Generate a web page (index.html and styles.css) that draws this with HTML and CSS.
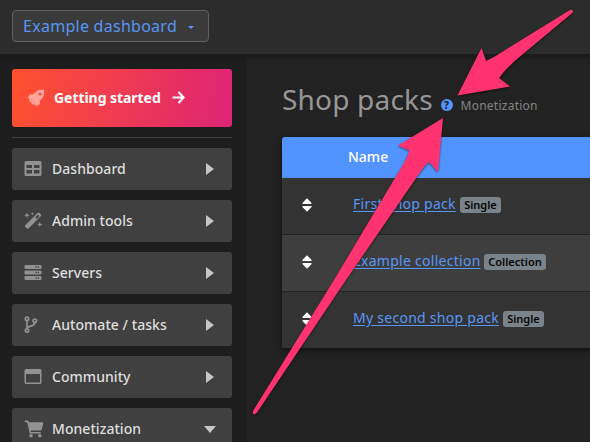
FILE: index.html
```html
<!DOCTYPE html>
<html lang="en">
<head>
<meta charset="utf-8">
<title>Shop packs</title>
<link rel="stylesheet" href="styles.css">
</head>
<body>
<header class="topbar">
  <button class="switcher"><span>Example dashboard</span><svg width="6" height="3" viewBox="0 0 6 3"><path d="M0 0h6L3 3z" fill="currentColor"/></svg></button>
</header>
<div class="layout">
  <nav class="sidebar">
    <a class="start">
      <svg class="rocket" width="18" height="18" viewBox="0 0 18 18"><path fill-rule="evenodd" d="M17 1C12 0 9 2 6.500 5.200H3.500C2.600 5.200 2 6 .6 9.500H4L8.500 14V17.500C12 16 12.800 15.400 12.800 14.500V11.500C16 9 18 6 17 1ZM13 3.500a1.500 1.500 0 1 1 0 3 1.500 1.500 0 0 1 0-3Z"/><path d="M3.200 9 9 14.800 6.500 16 2 11.500Z"/></svg>
      <span>Getting started</span>
      <svg width="13" height="13" viewBox="0 0 13 13" fill="none" stroke="#fff" stroke-width="2"><path d="M.5 6.500h11M6.500 1l5.200 5.500-5.200 5.500"/></svg>
    </a>
    <hr class="rule">
    <div class="menu">
      <a class="item"><svg class="icon" viewBox="0 0 19 17"><path fill-rule="evenodd" d="M2 1h14a1.500 1.500 0 0 1 1.500 1.500v12a1.500 1.500 0 0 1-1.500 1.500H2A1.500 1.500 0 0 1 .5 14.500v-12A1.500 1.500 0 0 1 2 1ZM2.500 5v3H8V5ZM10 5v3h5.500V5ZM2.500 10v3.500H8V10ZM10 10v3.500h5.500V10Z"/></svg><span>Dashboard</span><i class="caret"></i></a>
      <a class="item"><svg class="icon" viewBox="0 0 19 17"><path fill-rule="evenodd" d="M1 13.500 13.300 1.200Q14.500 0 15.700 1.200L16.800 2.300Q17.500 3.300 16.700 4.200L4.500 16.500Q3.700 17.200 3 16.500L1 14.500Q.6 14 1 13.500ZM11.300 5.300l1.600 1.600 2.600-2.800-1.400-1.400Z"/><path d="m3 .5.8 2 2 .8-2 .8-.8 2-.8-2-2-.8 2-.8ZM15.800 10l.7 1.800 1.900.7-1.900.7-.7 1.900-.7-1.900-1.900-.7 1.900-.7ZM8.300 0l.5 1.300 1.300.5-1.300.5-.5 1.300-.5-1.300-1.300-.5 1.300-.5Z"/></svg><span>Admin tools</span><i class="caret"></i></a>
      <a class="item"><svg class="icon" viewBox="0 0 19 17"><path d="M1.500 1h15a1 1 0 0 1 1 1v2a1 1 0 0 1-1 1h-15a1 1 0 0 1-1-1V2a1 1 0 0 1 1-1ZM1.500 6.500h15a1 1 0 0 1 1 1v2a1 1 0 0 1-1 1h-15a1 1 0 0 1-1-1v-2a1 1 0 0 1 1-1ZM1.500 12h15a1 1 0 0 1 1 1v2a1 1 0 0 1-1 1h-15a1 1 0 0 1-1-1v-2a1 1 0 0 1 1-1Z"/><path d="M11.500 3h1.200m1.100 0H15m-3.500 5.500h1.200m1.100 0H15m-3.500 5.500h1.200m1.100 0H15" stroke="#404040" stroke-width="1.300"/></svg><span>Servers</span><i class="caret"></i></a>
      <a class="item"><svg class="icon" viewBox="0 0 19 17"><g fill="none" stroke="#929292" stroke-width="1.700"><circle cx="3" cy="2.700" r="1.700"/><circle cx="3" cy="14.500" r="1.700"/><circle cx="10.800" cy="4.700" r="1.700"/><path d="M3 4.500v8.200M10.800 6.500C10.800 10.500 7 9.300 3 11.500"/></g></svg><span>Automate / tasks</span><i class="caret"></i></a>
      <a class="item"><svg class="icon" viewBox="0 0 19 17"><path fill-rule="evenodd" d="M2 1h14a1.500 1.500 0 0 1 1.500 1.500v12a1.500 1.500 0 0 1-1.500 1.500H2A1.500 1.500 0 0 1 .5 14.500v-12A1.500 1.500 0 0 1 2 1ZM2 6v8.500h14V6Z"/></svg><span>Community</span><i class="caret"></i></a>
      <a class="item"><svg class="icon cart" viewBox="0 0 20 18"><path d="M.8.600h2.900q.8 0 1 .8l.2.900h13.600q1 0 .8 1l-1.500 6.300q-.2.800-1 .8H6.600l.3 1.500h9.800v1.600H5.700L3.200 2.200H.8Z"/><circle cx="7" cy="15.800" r="1.800"/><circle cx="15.800" cy="15.800" r="1.800"/></svg><span>Monetization</span><i class="caret open"></i></a>
    </div>
  </nav>
  <main class="content">
    <div class="heading">
      <h1>Shop packs</h1>
      <span class="help">?</span>
      <span class="crumb">Monetization</span>
    </div>
    <section class="table">
      <div class="head">Name</div>
      <div class="row"><svg class="sort" width="10" height="14" viewBox="0 0 10 14"><path d="M5 .2 9.600 4.900q.4 1.100-.7 1.100H1.100Q0 6 .4 4.900ZM5 13.800.4 9.100Q0 8 1.100 8h7.800q1.100 0 .7 1.100Z"/></svg><a class="pack first">First shop pack</a><span class="badge">Single</span></div>
      <div class="row alt"><svg class="sort" width="10" height="14" viewBox="0 0 10 14"><path d="M5 .2 9.600 4.900q.4 1.100-.7 1.100H1.100Q0 6 .4 4.900ZM5 13.800.4 9.100Q0 8 1.100 8h7.800q1.100 0 .7 1.100Z"/></svg><a class="pack second">Example collection</a><span class="badge wide">Collection</span></div>
      <div class="row"><svg class="sort" width="10" height="14" viewBox="0 0 10 14"><path d="M5 .2 9.600 4.900q.4 1.100-.7 1.100H1.100Q0 6 .4 4.900ZM5 13.800.4 9.100Q0 8 1.100 8h7.800q1.100 0 .7 1.100Z"/></svg><a class="pack third">My second shop pack</a><span class="badge">Single</span></div>
    </section>
  </main>
</div>
<svg class="arrows" width="590" height="442" viewBox="0 0 590 442">
  <path d="M457.500 95.500 481.500 48 486 61Q493 58 502 52L570 10Q573 9 573 12L571 14 523 54Q506 68 499 78L510 86.500Z"/>
  <path d="M443 118 398 145.500 409.500 150.500Q407 158 401 168L334 280 253 411Q252 414 254.500 414.500L257 412.500 346 280 421 171Q425 165 429 162L438 172Z"/>
</svg>
</body>
</html>
```
FILE: styles.css
```css
* { box-sizing: border-box; }
body { margin: 0; width: 590px; height: 442px; overflow: hidden; background: #222; font-family: "Noto Sans", sans-serif; font-size: 14px; }
.topbar { height: 54px; padding: 10px 12px; background: #2c2c2c; }
.switcher { display: flex; align-items: center; width: 197px; height: 32px; margin: 0; padding: 0 0 0 10px; border: 1px solid #606060; border-radius: 4px; background: #3a3a3a; color: #5795f4; font: 16px "Noto Sans", sans-serif; letter-spacing: .27px; }
.switcher span { width: 165px; text-align: left; white-space: nowrap; }
.switcher svg { margin-top: 2px; }
.layout { display: flex; height: 388px; background: linear-gradient(#0004, transparent 7px); }
.sidebar { width: 247px; flex: none; padding: 15px 15px 0 12px; background: linear-gradient(#191919, #1d1d1d 8px); }
.start { display: flex; align-items: center; height: 58px; padding-left: 15px; border-radius: 3px; background: linear-gradient(100deg, #ff512f, #dd2476); color: #fff; font-weight: 700; }
.start span { width: 118px; margin: -2px 0 0 9px; white-space: nowrap; letter-spacing: -.05px; }
.start svg { margin-top: -1px; }
.rocket { fill: #ffa59a; }
.rule { height: 1px; margin: 10px 0; border: 0; background: #414141; }
.menu { display: flex; flex-direction: column; gap: 10px; }
.item { display: flex; align-items: center; height: 42px; flex: none; padding: 0 15px 0 12px; border-radius: 3px; background: #404040; color: #dedede; font-weight: 500; letter-spacing: .05px; }
.item span { flex: 1; margin: -2px 0 0 9px; white-space: nowrap; }
.icon { width: 19px; height: 17px; margin-top: -1px; fill: #929292; }
.cart { width: 20px; height: 18px; margin-right: -1px; }
.caret { width: 0; height: 0; margin: 0 3px 0 0; border: solid transparent; border-width: 6.500px 0 6.500px 8px; border-left-color: #c6c6c6; }
.caret.open { margin-right: 1px; border-width: 7px 6px 0; border-color: #c6c6c6 transparent transparent; }
.content { flex: 1; min-width: 0; padding: 25px 0 0 35px; }
.heading { display: flex; align-items: center; height: 58px; padding-bottom: 16px; }
.heading h1 { width: 158.500px; margin: -2px 0 0; color: #969696; font-size: 28px; font-weight: 400; line-height: 40px; letter-spacing: .2px; white-space: nowrap; }
.help { display: grid; place-items: center; width: 12px; height: 12px; margin-top: 10px; border-radius: 50%; background: #5394fb; color: #171e2a; font-size: 10px; font-weight: 800; line-height: 12px; }
.crumb { margin: 10px 0 0 8px; color: #858585; font-size: 12px; letter-spacing: .25px; }
.table { height: 211px; border-radius: 3px 0 0; overflow: hidden; background: #333; box-shadow: 0 2px 7px #0008; }
.head { height: 41px; padding-left: 66px; background: #5294ff; color: #fff; font-weight: 500; line-height: 40px; }
.row { display: flex; align-items: center; height: 57px; padding: 0 0 4px 20px; border-bottom: 1px solid #242424; }
.row:last-child { padding-bottom: 5px; border: 0; }
.alt { background: #3e3e3e; }
.sort { margin: 2px 41px 0 0; fill: #fff; }
.pack { width: 103px; margin-top: -2px; color: #5996f6; text-decoration: underline; text-underline-offset: 2px; letter-spacing: .27px; white-space: nowrap; }
.second { width: 127px; }
.third { width: 146px; }
.badge { width: 41px; height: 16px; margin: 2px 0 0 4px; border-radius: 3px; background: #7b838a; color: #050505; font-size: 11px; font-weight: 600; line-height: 16px; text-align: center; }
.badge.wide { width: 62px; }
.arrows { position: absolute; inset: 0; fill: #ff3370; filter: drop-shadow(0 1px 1px #0008); pointer-events: none; }
```
